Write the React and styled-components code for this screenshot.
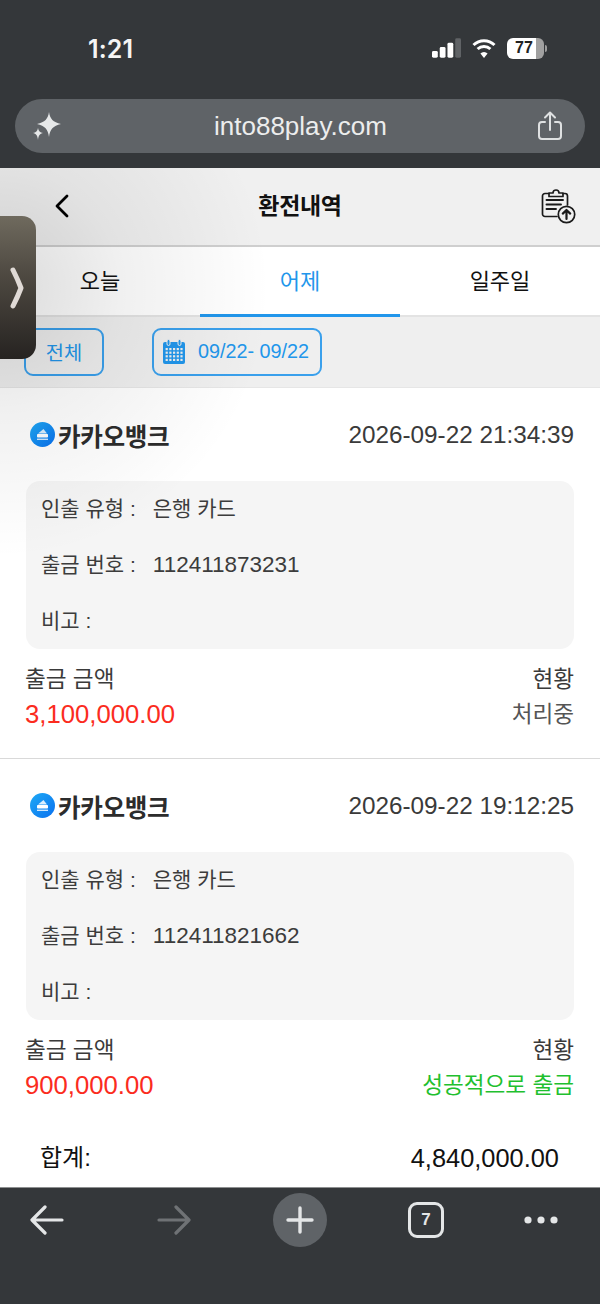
import React from "react";
import styled, { createGlobalStyle } from "styled-components";

const Global = createGlobalStyle`
  html, body { margin: 0; padding: 0; background: #fff; }
  * { box-sizing: border-box; }
  body { font-family: "Liberation Sans", "Noto Sans CJK KR", "Noto Sans", sans-serif; }
`;

const Phone = styled.div`
  width: 600px; height: 1304px; display: flex; flex-direction: column; overflow: hidden; position: relative;
`;
const TopChrome = styled.header`
  height: 168px; background: #34373a; padding: 0 15px; display: flex; flex-direction: column;
`;
const StatusBar = styled.div`
  height: 99px; display: flex; align-items: flex-start; justify-content: space-between; padding: 36px 38px 0 73px; color: #fff;
`;
const Clock = styled.span`
  font-family: Inter, sans-serif; font-size: 25px; line-height: 26px; font-weight: 600; color: #f5f5f5; letter-spacing: 0.1px;
`;
const StatusIcons = styled.div`
  display: flex; align-items: center; gap: 11px; height: 26px; margin-top: -1px;
`;
const Battery = styled.div`
  display: flex; align-items: center; gap: 1px;
`;
const BatteryBody = styled.div`
  width: 37px; height: 21px; border-radius: 6px;
  background: linear-gradient(90deg, #fff 0 78%, #a0a0a0 78% 100%);
  display: flex; align-items: center; justify-content: center; color: #222; font-size: 16px; font-weight: 700;
  padding-right: 3px;
`;
const BatteryNub = styled.span`
  width: 2px; height: 7px; border-radius: 0 2px 2px 0; background: #9d9d9d;
`;
const UrlBar = styled.div`
  height: 54px; border-radius: 27px; background: #5f6367; display: flex; align-items: center; justify-content: space-between; padding: 0 22px 0 17px;
`;
const UrlText = styled.span`
  font-size: 26px; color: #eceded; font-weight: 400; margin-left: 2px;
`;

const Content = styled.main`
  flex: 1; min-height: 0; position: relative; display: flex; flex-direction: column; background: #fff; overflow: hidden;
`;
const SideShade = styled.div`
  position: absolute; left: 0; top: 0; width: 300px; height: 420px; pointer-events: none; z-index: 2;
  background: radial-gradient(circle 270px at 0 120px, rgba(0,0,0,.14) 0, rgba(0,0,0,.06) 45%, rgba(0,0,0,0) 100%);
`;
const SideHandle = styled.div`
  position: absolute; left: 0; top: 48px; width: 36px; height: 143px; z-index: 3; border-radius: 0 14px 14px 0;
  background: linear-gradient(180deg, #6f6a5e 0%, #4f4a42 40%, #262321 100%);
  display: flex; align-items: center; padding-left: 10px;
`;
const NavBar = styled.div`
  height: 79px; background: #f0f0f0; border-bottom: 2px solid #cfcfcf; display: grid; grid-template-columns: 1fr auto 1fr; align-items: center; padding: 0 24px 1px;
`;
const NavTitle = styled.h1`
  margin: 0; font-size: 23px; font-weight: 700; color: #111; line-height: 1; letter-spacing: -0.3px;
`;
const NavRight = styled.div`
  display: flex; justify-content: flex-end;
`;
const NavLeft = styled.div`
  display: flex; justify-content: flex-start; padding-left: 30px;
`;
const Tabs = styled.nav`
  height: 70px; display: grid; grid-template-columns: repeat(3, 1fr); border-bottom: 2px solid #e3e3e3; background: #fff;
`;
const Tab = styled.div`
  display: flex; align-items: center; justify-content: center; font-size: 22px; padding-bottom: 4px;
  height: 70px; color: ${p => (p.$active ? "#2196eb" : "#111")};
  border-bottom: 3px solid ${p => (p.$active ? "#2196eb" : "transparent")};
`;
const FilterBar = styled.div`
  height: 71px; background: #efefef; border-bottom: 1px solid #e6e6e6; display: flex; align-items: center; gap: 48px; padding: 0 0 1px 24px;
`;
const FilterButton = styled.div`
  height: 48px; width: ${p => p.$w}px; border: 2px solid #3aa0ec; border-radius: 9px; color: #2196eb; font-size: 19.8px;
  display: flex; align-items: center; justify-content: ${p => (p.$left ? "flex-start" : "center")}; gap: 13px; padding-left: ${p => (p.$left ? "9px" : 0)};
`;
const Card = styled.section`
  padding: 0 26px 0 25px; height: ${p => p.$h}px; border-bottom: ${p => (p.$line ? "1px solid #d9d9d9" : "none")};
  display: flex; flex-direction: column; background: #fff;
`;
const CardHead = styled.div`
  height: 93px; display: flex; align-items: center; justify-content: space-between; padding-left: 5px;
`;
const Bank = styled.div`
  display: flex; align-items: center; gap: 3px; font-size: 24.6px; font-weight: 700; color: #2c2c2c; letter-spacing: -0.4px;
`;
const BankLogo = styled.span`
  width: 25px; height: 25px; border-radius: 50%; background: linear-gradient(135deg, #1eaaf5, #0a70ef); display: flex; align-items: center; justify-content: center;
`;
const DateTime = styled.span`
  font-size: 24.3px; color: #3a3a3a;
`;
const InfoBox = styled.div`
  height: 168px; background: #f5f5f5; border-radius: 14px; margin-left: 1px; padding: 10px 16px 0 15px; display: flex; flex-direction: column; gap: 20px;
`;
const InfoRow = styled.div`
  height: 36px; line-height: 36px; display: flex; align-items: baseline; gap: 17px; font-size: 21px; color: #3c3c3c;
`;
const InfoValue = styled.span`
  font-size: ${p => (p.$num ? "22.5px" : "21px")};
`;
const AmountRow = styled.div`
  display: flex; justify-content: space-between; align-items: center; height: 36px; font-size: 22.6px; color: #3a3a3a;
  margin-top: ${p => (p.$first ? "10px" : "1px")};
`;
const Amount = styled.span`
  font-size: 25.7px; color: #fb2c1e; font-weight: 400;
`;
const Status = styled.span`
  font-size: 22.6px; margin-bottom: 3px; color: ${p => (p.$ok ? "#1fc02f" : "#555")};
`;
const TotalRow = styled.div`
  flex: 1; display: flex; justify-content: space-between; align-items: flex-start; padding: 0 41px 0 40px; font-size: 24px; color: #111; background: #fff; line-height: 30px; margin-top: 13px;
`;
const TotalValue = styled.span`
  font-size: 25.4px;
`;
const BottomBar = styled.footer`
  height: 117px; background: #34373a; border-top: 1px solid #8d8f90; display: grid; grid-template-columns: 94px 160px 92px 160px 70px; padding: 5px 0 0 0;
  align-items: start; justify-items: center;
`;
const BarSlot = styled.div`
  height: 54px; width: 100%; display: flex; align-items: center; justify-content: center;
`;
const PlusCircle = styled.div`
  width: 54px; height: 54px; border-radius: 50%; background: #5f6367; display: flex; align-items: center; justify-content: center;
`;
const TabCount = styled.div`
  width: 36px; height: 36px; border: 3px solid #e4e6e7; border-radius: 9px; color: #e4e6e7; font-size: 17px; font-weight: 700; display: flex; align-items: center; justify-content: center;
`;

const Entry = ({ time, no, amount, status, ok, h, line }) => (
  <Card $h={h} $line={line}>
    <CardHead>
      <Bank>
        <BankLogo>
          <svg width="15" height="15" viewBox="0 0 15 15">
            <path d="M3 6.5 L8.5 2 L12 6.5 Z" fill="#d8eeff" />
            <rect x="2" y="7" width="11" height="3.6" rx="0.8" fill="#fff" />
            <rect x="2" y="11.6" width="11" height="1.4" fill="#cfe8ff" />
          </svg>
        </BankLogo>
        카카오뱅크
      </Bank>
      <DateTime>{time}</DateTime>
    </CardHead>
    <InfoBox>
      <InfoRow><span>인출 유형 :</span><InfoValue>은행 카드</InfoValue></InfoRow>
      <InfoRow><span>출금 번호 :</span><InfoValue $num>{no}</InfoValue></InfoRow>
      <InfoRow><span>비고 :</span></InfoRow>
    </InfoBox>
    <AmountRow $first><span>출금 금액</span><span>현황</span></AmountRow>
    <AmountRow><Amount>{amount}</Amount><Status $ok={ok}>{status}</Status></AmountRow>
  </Card>
);

export default function App() {
  return (
    <Phone>
      <Global />
      <TopChrome>
        <StatusBar>
          <Clock>1:21</Clock>
          <StatusIcons>
            <svg width="29" height="20" viewBox="0 0 30 20">
              <rect x="0" y="13" width="6" height="7" rx="1.5" fill="#fff" />
              <rect x="8" y="9" width="6" height="11" rx="1.5" fill="#fff" />
              <rect x="16" y="4.5" width="6" height="15.5" rx="1.5" fill="#fff" />
              <rect x="24" y="0" width="6" height="20" rx="1.5" fill="#606366" />
            </svg>
            <svg width="24" height="20" viewBox="0 0 24 20" fill="none" stroke="#fff" strokeWidth="3" strokeLinecap="butt">
              <path d="M1.5 7 A15 15 0 0 1 22.5 7" />
              <path d="M5.6 11 A9.3 9.3 0 0 1 18.4 11" />
              <path d="M12 20 L8.4 15.6 A5 5 0 0 1 15.6 15.6 Z" fill="#fff" stroke="none" />
            </svg>
            <Battery>
              <BatteryBody>77</BatteryBody>
              <BatteryNub />
            </Battery>
          </StatusIcons>
        </StatusBar>
        <UrlBar>
          <svg width="30" height="30" viewBox="0 0 30 30" fill="#e6e8e9">
            <path d="M17 1 C18 8 21 11 29 13 C21 15 18 18 17 26 C16 18 13 15 5 13 C13 11 16 8 17 1 Z" />
            <path d="M6 17 C6.5 20 8 21.5 11 22 C8 22.7 6.5 24 6 29 C5.5 24 4 22.7 1 22 C4 21.5 5.5 20 6 17 Z" />
          </svg>
          <UrlText>into88play.com</UrlText>
          <svg width="26" height="30" viewBox="0 0 26 30" fill="none" stroke="#dfe1e2" strokeWidth="2" strokeLinecap="round" strokeLinejoin="round">
            <path d="M8 11 H5 a3 3 0 0 0 -3 3 V25 a3 3 0 0 0 3 3 H21 a3 3 0 0 0 3 -3 V14 a3 3 0 0 0 -3 -3 H18" />
            <path d="M13 19 V2 M8 6.5 L13 1.5 L18 6.5" />
          </svg>
        </UrlBar>
      </TopChrome>

      <Content>
        <SideShade />
        <SideHandle>
          <svg width="14" height="42" viewBox="0 0 14 42" fill="none" stroke="#e0dad6" strokeWidth="5" strokeLinecap="round" strokeLinejoin="round">
            <path d="M3 3 Q8 13 11 21 Q8 29 3 39" />
          </svg>
        </SideHandle>
        <NavBar>
          <NavLeft>
            <svg width="16" height="24" viewBox="0 0 16 24" fill="none" stroke="#000" strokeWidth="2.8" strokeLinecap="round" strokeLinejoin="round">
              <path d="M13 2 L3 12 L13 22" />
            </svg>
          </NavLeft>
          <NavTitle>환전내역</NavTitle>
          <NavRight>
            <svg width="36" height="36" viewBox="0 0 36 36" fill="none" stroke="#1a1a1a" strokeWidth="1.7" strokeLinecap="round" strokeLinejoin="round">
              <path d="M9 5.5 H5 a2.5 2.5 0 0 0 -2.5 2.5 V26 a2.5 2.5 0 0 0 2.5 2.5 H17" />
              <path d="M9 8.5 V5 H13 C13 1 19 1 19 5 H23 V8.5 Z" />
              <path d="M23 5.5 H25 a2.5 2.5 0 0 1 2.5 2.5 V17" />
              <path d="M6.5 12 H23 M6.5 16.5 H21 M6.5 21 H16" strokeWidth="1.9" />
              <circle cx="26.5" cy="26.5" r="8.2" />
              <path d="M26.5 31 V22 M22.8 25.6 L26.5 22 L30.2 25.6" strokeWidth="2.2" />
            </svg>
          </NavRight>
        </NavBar>
        <Tabs>
          <Tab>오늘</Tab>
          <Tab $active>어제</Tab>
          <Tab>일주일</Tab>
        </Tabs>
        <FilterBar>
          <FilterButton $w={80}>전체</FilterButton>
          <FilterButton $w={170} $left>
            <svg width="22" height="25" viewBox="0 0 22 25">
              <path d="M2 3 H20 a2 2 0 0 1 2 2 V23 a2 2 0 0 1 -2 2 H2 a2 2 0 0 1 -2 -2 V5 a2 2 0 0 1 2 -2 Z" fill="#2196eb" />
              <rect x="4" y="0.5" width="3" height="6" rx="1.5" fill="#2196eb" stroke="#efefef" strokeWidth="1" />
              <rect x="15" y="0.5" width="3" height="6" rx="1.5" fill="#2196eb" stroke="#efefef" strokeWidth="1" />
              {[0, 1, 2, 3].map(r =>
                [0, 1, 2, 3, 4].map(c => (
                  <rect key={`${r}-${c}`} x={2.6 + c * 3.7} y={9 + r * 3.6} width="2.2" height="2.2" fill="#efefef" />
                ))
              )}
            </svg>
            09/22- 09/22
          </FilterButton>
        </FilterBar>
        <Entry time="2026-09-22 21:34:39" no="112411873231" amount="3,100,000.00" status="처리중" h={371} line />
        <Entry time="2026-09-22 19:12:25" no="112411821662" amount="900,000.00" status="성공적으로 출금" ok h={371} />
        <TotalRow><span>합계:</span><TotalValue>4,840,000.00</TotalValue></TotalRow>
      </Content>

      <BottomBar>
        <BarSlot>
          <svg width="34" height="30" viewBox="0 0 34 30" fill="none" stroke="#e4e6e7" strokeWidth="3.2" strokeLinecap="round" strokeLinejoin="round">
            <path d="M32 15 H3 M15 2 L2 15 L15 28" />
          </svg>
        </BarSlot>
        <BarSlot>
          <svg width="34" height="30" viewBox="0 0 34 30" fill="none" stroke="#6f7275" strokeWidth="3.2" strokeLinecap="round" strokeLinejoin="round">
            <path d="M2 15 H31 M19 2 L32 15 L19 28" />
          </svg>
        </BarSlot>
        <BarSlot>
          <PlusCircle>
            <svg width="28" height="28" viewBox="0 0 28 28" stroke="#e4e6e7" strokeWidth="3.4" strokeLinecap="round">
              <path d="M14 2 V26 M2 14 H26" />
            </svg>
          </PlusCircle>
        </BarSlot>
        <BarSlot><TabCount>7</TabCount></BarSlot>
        <BarSlot>
          <svg width="34" height="8" viewBox="0 0 34 8" fill="#e4e6e7">
            <circle cx="4" cy="4" r="3.6" /><circle cx="17" cy="4" r="3.6" /><circle cx="30" cy="4" r="3.6" />
          </svg>
        </BarSlot>
      </BottomBar>
    </Phone>
  );
}
